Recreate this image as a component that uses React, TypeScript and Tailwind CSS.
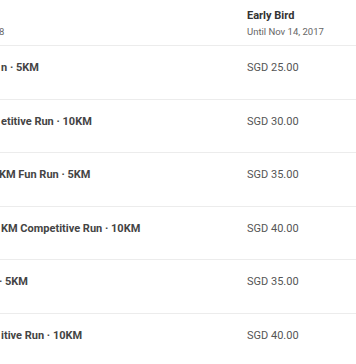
import React from "react";

const rows = [
  { name: "n · 5KM", ml: "ml-[1px]", price: "SGD 25.00" },
  { name: "etitive Run · 10KM", ml: "ml-[1px]", price: "SGD 30.00" },
  { name: "KM Fun Run · 5KM", ml: "ml-[-1px]", price: "SGD 35.00" },
  { name: "KM Competitive Run · 10KM", ml: "ml-[1px]", price: "SGD 40.00" },
  { name: "· 5KM", ml: "ml-[-1px]", price: "SGD 35.00" },
  { name: "itive Run · 10KM", ml: "ml-[1px]", price: "SGD 40.00" },
];

export default function App() {
  return (
    <div
      className="w-[356px] h-[364px] overflow-hidden bg-white text-[11px]"
      style={{ fontFamily: "Roboto, 'Liberation Sans', sans-serif" }}
    >
      <div className="flex h-[45px] pt-[9px]">
        <div className="w-[247px] shrink-0 pt-[16px]">
          <span className="block text-[#666] text-[9.5px] leading-[13px] ml-[-1px]">8</span>
        </div>
        <div className="flex flex-col">
          <span className="font-bold text-[#333] leading-[14px]">Early Bird</span>
          <span className="text-[#666] text-[9.5px] leading-[13px] mt-[2px]">Until Nov 14, 2017</span>
        </div>
      </div>
      {rows.map((r, i) => (
        <div key={i} className="flex h-[53.6px] border-t border-[#ececec] pt-[15px]">
          <div className="w-[247px] shrink-0 overflow-hidden whitespace-nowrap">
            <span className={`block ${r.ml} font-bold text-[#444] leading-[14px]`}>{r.name}</span>
          </div>
          <div className="text-[#555] leading-[14px]">{r.price}</div>
        </div>
      ))}
    </div>
  );
}
